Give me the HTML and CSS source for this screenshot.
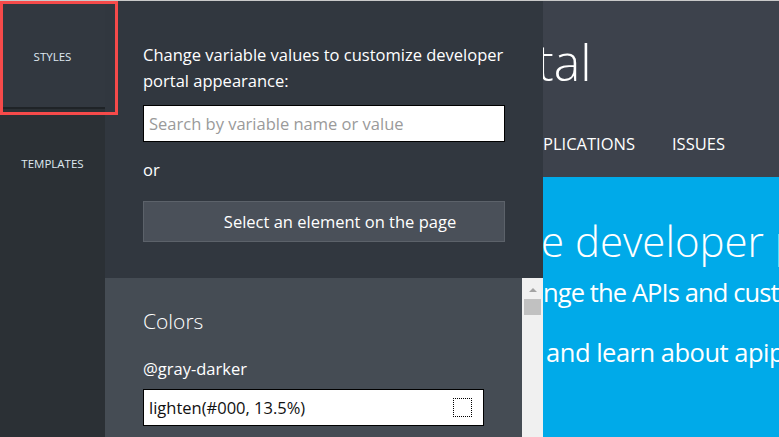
FILE: index.html
```html
<!DOCTYPE html>
<html>
<head>
<meta charset="utf-8">
<link rel="stylesheet" href="styles.css">
</head>
<body>
<div class="app">
  <nav class="side">
    <div class="tab tab-active">STYLES</div>
    <div class="tab">TEMPLATES</div>
  </nav>
  <section class="panel">
    <div class="panel-top">
      <p class="intro">Change variable values to customize developer portal appearance:</p>
      <input class="search" type="text" placeholder="Search by variable name or value">
      <p class="or">or</p>
      <button class="select-btn">Select an element on the page</button>
    </div>
    <div class="panel-bottom">
      <div class="vars">
        <h2 class="group">Colors</h2>
        <label class="var-name">@gray-darker</label>
        <div class="var-input">
          <span class="var-value">lighten(#000, 13.5%)</span>
          <span class="swatch"></span>
        </div>
      </div>
      <div class="scrollbar">
        <span class="arrow"></span>
        <span class="thumb"></span>
      </div>
    </div>
  </section>
  <main class="portal">
    <header class="portal-head">
      <div class="p-title">tal</div>
      <div class="p-nav"><span class="nav-item">PLICATIONS</span><span class="nav-item">ISSUES</span></div>
    </header>
    <div class="hero">
      <div class="h-title">e developer p</div>
      <div class="h-line one">nge the APIs and cust</div>
      <div class="h-line two">&nbsp;and learn about apip</div>
    </div>
  </main>
  <div class="highlight"></div>
</div>
</body>
</html>
```

FILE: styles.css
```css
* { box-sizing: border-box; }
html, body { margin: 0; padding: 0; }
body {
  width: 779px;
  height: 437px;
  overflow: hidden;
  background: #2b3035;
  font-family: "Open Sans", "Noto Sans", sans-serif;
  border-top: 1px solid #c9c9c9;
}
.app {
  position: relative;
  display: flex;
  height: 436px;
}
.side {
  width: 105px;
  flex: none;
  background: #2b3035;
  display: flex;
  flex-direction: column;
}
.tab {
  height: 108px;
  color: #dfe8f0;
  font-size: 11.5px;
  display: flex;
  align-items: center;
  justify-content: center;
}
.tab-active {
  height: 108px;
  background: #323840;
  border-bottom: 2px solid #1f2327;
  padding-top: 5px;
}
.panel {
  width: 438px;
  flex: none;
  display: flex;
  flex-direction: column;
}
.panel-top {
  height: 277px;
  background: #31373f;
  padding: 41px 38px 0 38px;
  color: #ffffff;
}
.intro {
  margin: 0;
  font-size: 16.5px;
  line-height: 26px;
}
.search {
  display: block;
  width: 362px;
  height: 37px;
  margin-top: 11px;
  border: 1px solid #000;
  background: #fff;
  font-family: inherit;
  font-size: 16.5px;
  padding: 0 5px;
  outline: none;
}
.search::placeholder { color: #9a9a9a; }
.or {
  margin: 17px 0 0 0;
  font-size: 16.5px;
  line-height: 22px;
}
.select-btn {
  display: block;
  width: 362px;
  height: 41px;
  margin-top: 20px;
  background: #4a5059;
  border: 1px solid #5c626a;
  color: #fff;
  font-family: inherit;
  font-size: 16.5px;
  padding: 0 0 0 32px;
  text-align: center;
}
.panel-bottom {
  flex: 1;
  display: flex;
  background: #454c54;
}
.vars {
  flex: 1;
  padding: 30px 0 0 38px;
  color: #fff;
}
.group {
  margin: 0;
  font-weight: 300;
  font-size: 21px;
  line-height: 26px;
}
.var-name {
  display: block;
  margin-top: 25px;
  font-size: 16.5px;
  line-height: 20px;
}
.var-input {
  margin-top: 10px;
  width: 341px;
  height: 37px;
  background: #fff;
  border: 1px solid #000;
  display: flex;
  align-items: center;
  justify-content: space-between;
  padding: 0 11px 0 5px;
}
.var-value {
  color: #111;
  font-size: 16.5px;
}
.swatch {
  width: 19px;
  height: 19px;
  border: 1px dotted #000;
}
.scrollbar {
  width: 21px;
  flex: none;
  background: #f0f0f0;
  display: flex;
  flex-direction: column;
  align-items: center;
  padding-top: 10px;
}
.arrow {
  width: 0;
  height: 0;
  border-left: 4px solid transparent;
  border-right: 4px solid transparent;
  border-bottom: 4px solid #a3a3a3;
}
.thumb {
  margin-top: 7px;
  width: 17px;
  height: 16px;
  background: #c1c1c1;
}
.portal {
  flex: 1;
  overflow: hidden;
  display: flex;
  flex-direction: column;
  color: #fff;
}
.portal-head {
  height: 176px;
  background: #3d424c;
  flex: none;
}
.p-title, .p-nav, .h-title, .h-line {
  display: flex;
  white-space: nowrap;
}
.p-title {
  margin: 31px 0 0 -6px;
  font-size: 50px;
  font-weight: 300;
  line-height: 60px;
}
.p-nav {
  margin-top: 41px;
  font-size: 16.5px;
  line-height: 22px;
}
.nav-item + .nav-item { margin-left: 37px; }
.hero {
  flex: 1;
  background: #00aae9;
}
.h-title {
  margin: 39px 0 0 -2px;
  font-size: 42px;
  font-weight: 300;
  line-height: 50px;
}
.h-line {
  font-size: 25.5px;
  line-height: 34px;
  letter-spacing: -0.5px;
}
.h-line.one { margin-top: 9px; letter-spacing: -0.9px; }
.h-line.two { margin-top: 26px; margin-left: -3px; }
.highlight {
  position: absolute;
  left: 0;
  top: 0;
  width: 118px;
  height: 114px;
  border: 3px solid #f64a4a;
  pointer-events: none;
}
```
